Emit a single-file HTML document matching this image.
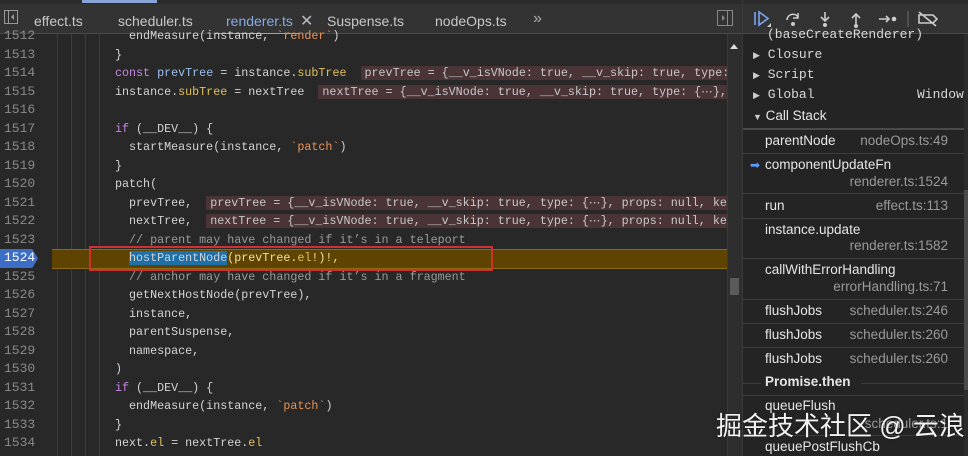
<!DOCTYPE html>
<html><head><meta charset="utf-8"><style>
*{margin:0;padding:0;box-sizing:border-box}
body{width:968px;height:456px;overflow:hidden;background:#282828;font-family:"Liberation Sans",sans-serif;position:relative}
.abs{position:absolute}
#tabs{left:0;top:0;width:742px;height:34px;background:#333;border-top:4px solid #2b2b2b;border-bottom:1px solid #4a4a4a}
.tab{position:absolute;top:9px;font-size:14px;color:#c8c8c8}
#code{left:0;top:34px;width:727px;height:422px;background:#282828;overflow:hidden}
.ln{position:absolute;left:0;width:727px;height:18.5px;font-family:"Liberation Mono",monospace;font-size:11.7px;line-height:18.5px;color:#d4d4d4;white-space:pre}
.num{position:absolute;left:4px;color:#8a8a8a;font-size:13px}
.tx{position:absolute;left:115px}
.kw{color:#c586e0}.pr{color:#e0c060}.st{color:#e8935a}.cm{color:#9a9a9a}
.iv{background:#4a3436;color:#c8c8c8;padding:0 4px}
.g{position:absolute;top:34px;width:1px;height:422px;background:#3c3c3c}
#rp{left:742px;top:0;width:226px;height:456px;background:#242424;border-left:1px solid #3a3a3a}
.r{position:absolute;left:0;width:224px;font-size:13.5px;color:#e6e6e6}
.sep{position:absolute;left:0;width:224px;height:1px;background:#3d3d3d}
.loc{position:absolute;right:20px;color:#9a9a9a;font-size:13.5px}
.sc{font-family:"Liberation Mono",monospace;font-size:13px;color:#d8d8d8}
</style></head><body>
<div id="tabs" class="abs">
 <div class="abs" style="left:82px;top:-4px;width:75px;height:3px;background:#8aa4d8"></div>
 <svg class="abs" style="left:4px;top:6px" width="14" height="14"><rect x="0.5" y="0.5" width="13" height="13" fill="none" stroke="#999"/><line x1="4.5" y1="1" x2="4.5" y2="13" stroke="#999"/><path d="M10 4 L7 7 L10 10Z" fill="#999"/></svg>
 <span class="tab" style="left:34px">effect.ts</span>
 <span class="tab" style="left:118px">scheduler.ts</span>
 <span class="tab" style="left:226px;color:#8aa8e0">renderer.ts</span>
 <span class="tab" style="left:300px;color:#bbb;font-size:16px;top:7px">✕</span>
 <span class="tab" style="left:327px">Suspense.ts</span>
 <span class="tab" style="left:435px">nodeOps.ts</span>
 <span class="tab" style="left:533px;color:#aaa;font-size:16px;top:6px">»</span>
 <div class="abs" style="left:215px;top:29px;width:85px;height:2px;background:#8aa4d8"></div>
 <svg class="abs" style="left:717px;top:6px" width="16" height="16"><rect x="0.5" y="0.5" width="15" height="15" fill="none" stroke="#888"/><line x1="10.5" y1="1" x2="10.5" y2="15" stroke="#888"/><path d="M5 5 L8 8 L5 11Z" fill="#888"/></svg>
</div>
<div id="code" class="abs"></div>
<div class="g" style="left:57px"></div><div class="g" style="left:71px"></div><div class="g" style="left:85px"></div><div class="g" style="left:99px"></div>
<div class="abs" style="left:52px;top:249px;width:675px;height:20px;background:#5e4400;border-top:1px solid #8a6a18;border-bottom:1px solid #8a6a18"></div>
<div class="abs" style="left:0;top:249px;width:38px;height:19px;background:#3b6ec4;clip-path:polygon(0 0,85% 0,100% 50%,85% 100%,0 100%)"></div>
<div class="abs" style="left:89px;top:246px;width:404px;height:25px;border:2px solid #d03030"></div>
<div id="lines"></div>
<div class="abs" style="left:727px;top:34px;width:15px;height:422px;background:#2e2e2e;border-left:1px solid #3a3a3a"></div>
<div class="abs" style="left:730px;top:278px;width:9px;height:17px;background:#5a5a5a"></div>
<div class="abs" style="left:730px;top:44px;width:0;height:0;border-left:4px solid transparent;border-right:4px solid transparent;border-bottom:5px solid #ddd"></div>

<div id="rp" class="abs">
 <div class="abs" style="left:0;top:0;width:225px;height:34px;background:#333;border-top:4px solid #2b2b2b;border-bottom:1px solid #4a4a4a"></div>
 <svg class="abs" style="left:10px;top:10px" width="200" height="18" fill="none" stroke="#ccc" stroke-width="1.6">
  <path d="M2 2 V15" stroke="#7aa2f0"/><path d="M6 2 L15 8.5 L6 15Z" stroke="#7aa2f0"/><path d="M14 17 L18 13 V17Z" fill="#ccc" stroke="none"/>
  <path d="M34 10 A6 6 0 0 1 45 7" /><path d="M45 3 V8 H40"/><circle cx="40" cy="14" r="2" fill="#ccc" stroke="none"/>
  <path d="M72 2 V10 M68 7 L72 11 L76 7"/><circle cx="72" cy="15" r="2" fill="#ccc" stroke="none"/>
  <path d="M103 14 V5 M99 8 L103 4 L107 8"/><circle cx="103" cy="16" r="2" fill="#ccc" stroke="none"/>
  <path d="M126 9 H136 M133 6 L136 9 L133 12"/><circle cx="141" cy="9" r="2.3" fill="#ccc" stroke="none"/>
  <path d="M155 1 V17" stroke="#555"/>
  <path d="M166 5 H180 L184 9 L180 13 H166Z M166 2 L183 16"/>
 </svg>
 <div class="r sc" style="top:27px;left:24px">(baseCreateRenderer)</div>
 <div class="r sc" style="top:47px;left:10px"><span style="font-size:9px;color:#ccc">▶</span>&nbsp;Closure</div>
 <div class="r sc" style="top:67px;left:10px"><span style="font-size:9px;color:#ccc">▶</span>&nbsp;Script</div>
 <div class="r sc" style="top:87px;left:10px"><span style="font-size:9px;color:#ccc">▶</span>&nbsp;Global<span style="position:absolute;left:164px">Window</span></div>
 <div class="r" style="top:108px;left:10px"><span style="font-size:9px;color:#ccc">▼</span> Call Stack</div>
 <div class="sep" style="top:128px;background:#4a4a4a;height:2px"></div>
 <div class="r" style="top:133px;left:22px">parentNode</div><div class="loc" style="top:133px">nodeOps.ts:49</div>
 <div class="sep" style="top:153px"></div>
 <div class="abs" style="left:7px;top:158px;color:#5b9cff;font-size:12px">➡</div>
 <div class="r" style="top:157px;left:22px">componentUpdateFn</div><div class="loc" style="top:174px">renderer.ts:1524</div>
 <div class="sep" style="top:193px"></div>
 <div class="r" style="top:198px;left:22px">run</div><div class="loc" style="top:198px">effect.ts:113</div>
 <div class="sep" style="top:218px"></div>
 <div class="r" style="top:222px;left:22px">instance.update</div><div class="loc" style="top:238px">renderer.ts:1582</div>
 <div class="sep" style="top:258px"></div>
 <div class="r" style="top:262px;left:22px">callWithErrorHandling</div><div class="loc" style="top:279px">errorHandling.ts:71</div>
 <div class="sep" style="top:299px"></div>
 <div class="r" style="top:303px;left:22px">flushJobs</div><div class="loc" style="top:303px">scheduler.ts:246</div>
 <div class="sep" style="top:323px"></div>
 <div class="r" style="top:327px;left:22px">flushJobs</div><div class="loc" style="top:327px">scheduler.ts:260</div>
 <div class="sep" style="top:347px"></div>
 <div class="r" style="top:351px;left:22px">flushJobs</div><div class="loc" style="top:351px">scheduler.ts:260</div>
 <div class="sep" style="top:383px;width:18px;left:0"></div>
 <div class="r" style="top:374px;left:22px;font-weight:bold">Promise.then</div>
 <div class="sep" style="top:383px;left:118px;width:106px"></div>
 <div class="sep" style="top:395px"></div>
 <div class="r" style="top:398px;left:22px">queueFlush</div><div class="loc" style="top:416px">scheduler.ts:1</div>
 <div class="sep" style="top:435px"></div>
 <div class="r" style="top:439px;left:22px">queuePostFlushCb</div>
 <div class="abs" style="left:221px;top:34px;width:4px;height:422px;background:#2c2c2c"></div>
 <div class="abs" style="left:221px;top:190px;width:4px;height:200px;background:#4a4a4a"></div>
</div>
<div class="abs" style="left:716px;top:406px;font-family:'Liberation Sans','Noto Sans CJK SC',sans-serif;font-size:26px;color:#f2f2f2;white-space:nowrap;text-shadow:0 0 2px rgba(0,0,0,.4)">掘金技术社区 @ 云浪</div>

<script>
var L=[
["1512",'  endMeasure(instance, <span class="st">`render`</span>)'],
["1513",'}'],
["1514",'<span class="kw">const</span> <span style="color:#9cc0f0">prevTree</span> = instance.<span class="pr">subTree</span>  <span class="iv">prevTree = {__v_isVNode: true, __v_skip: true, type: </span>'],
["1515",'instance.<span class="pr">subTree</span> = nextTree  <span class="iv">nextTree = {__v_isVNode: true, __v_skip: true, type: {\u22ef}, </span>'],
["1516",''],
["1517",'<span class="kw">if</span> (__DEV__) {'],
["1518",'  startMeasure(instance, <span class="st">`patch`</span>)'],
["1519",'}'],
["1520",'patch('],
["1521",'  prevTree,  <span class="iv">prevTree = {__v_isVNode: true, __v_skip: true, type: {\u22ef}, props: null, ke</span>'],
["1522",'  nextTree,  <span class="iv">nextTree = {__v_isVNode: true, __v_skip: true, type: {\u22ef}, props: null, ke</span>'],
["1523",'  <span class="cm">// parent may have changed if it\u2019s in a teleport</span>'],
["1524",'  <span style="background:#1f6fa8">hostParentNode</span><span style="color:#f0e0a0">(prevTree.</span><span class="pr">el</span><span style="color:#f0e0a0">!)!,</span>'],
["1525",'  <span class="cm">// anchor may have changed if it\u2019s in a fragment</span>'],
["1526",'  getNextHostNode(prevTree),'],
["1527",'  instance,'],
["1528",'  parentSuspense,'],
["1529",'  namespace,'],
["1530",')'],
["1531",'<span class="kw">if</span> (__DEV__) {'],
["1532",'  endMeasure(instance, <span class="st">`patch`</span>)'],
["1533",'}'],
["1534",'next.<span class="pr">el</span> = nextTree.<span class="pr">el</span>']];
var h='';
for(var i=0;i<L.length;i++){var t=27+i*18.5;
var nc=L[i][0]=="1524"?'color:#fff':'';
h+='<div class="ln" style="top:'+t+'px"><span class="num" style="'+nc+'">'+L[i][0]+'</span><span class="tx">'+L[i][1]+'</span></div>';}
document.getElementById('lines').innerHTML=h;
</script>
</body></html>
